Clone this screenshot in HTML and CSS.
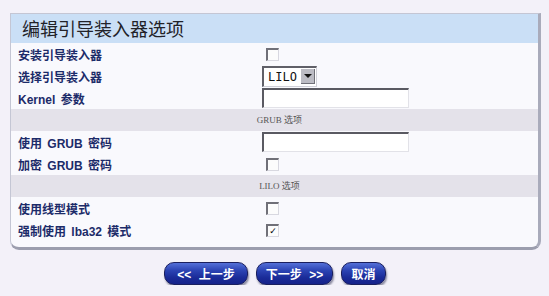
FILE: index.html
```html
<!DOCTYPE html>
<html lang="zh-CN">
<head>
    <meta charset="UTF-8">
    <title>编辑引导装入器选项</title>
    <link rel="stylesheet" href="styles.css">
</head>
<body>
    <div class="panel">
        <div class="panel-head">编辑引导装入器选项</div>

        <div class="row">
            <span class="label">安装引导装入器</span>
            <span class="field"><span class="check"></span></span>
        </div>
        <div class="row">
            <span class="label">选择引导装入器</span>
            <span class="field">
                <span class="select"><span class="select-text">LILO</span><span class="select-arrow"></span></span>
            </span>
        </div>
        <div class="row">
            <span class="label">Kernel 参数</span>
            <span class="field"><input class="text" type="text"></span>
        </div>

        <div class="section">GRUB 选项</div>

        <div class="row">
            <span class="label">使用 GRUB 密码</span>
            <span class="field"><input class="text" type="password"></span>
        </div>
        <div class="row">
            <span class="label">加密 GRUB 密码</span>
            <span class="field"><span class="check"></span></span>
        </div>

        <div class="section">LILO 选项</div>

        <div class="row">
            <span class="label">使用线型模式</span>
            <span class="field"><span class="check"></span></span>
        </div>
        <div class="row">
            <span class="label">强制使用 lba32 模式</span>
            <span class="field"><span class="check checked">✓</span></span>
        </div>
    </div>

    <div class="buttons">
        <button class="btn btn-prev">&lt;&lt; 上一步</button>
        <button class="btn btn-next">下一步 &gt;&gt;</button>
        <button class="btn btn-cancel">取消</button>
    </div>
</body>
</html>
```

FILE: styles.css
```css
body {
    margin: 0;
    padding: 13px 0 0 0;
    background-color: #f3f1f9;
    font-family: "Liberation Sans", "Noto Sans CJK SC", sans-serif;
}

.panel {
    margin-left: 10px;
    width: 527px;
    background-color: #f9f9fd;
    border: 1px solid #c4c6d4;
    border-right: 3px solid #a9abbb;
    border-bottom: 3px solid #9c9eae;
    border-radius: 0 0 9px 9px;
    padding-bottom: 6px;
}

.panel-head {
    height: 29px;
    line-height: 29px;
    padding-left: 11px;
    background-color: #cadff6;
    font-family: "Noto Sans CJK SC", sans-serif;
    font-size: 18px;
    color: #222228;
}

.row {
    display: grid;
    grid-template-columns: 251px 1fr;
    align-items: center;
    height: 22px;
}

.label {
    padding-left: 7px;
    font-family: "Liberation Sans", "Noto Sans CJK SC", sans-serif;
    font-size: 12px;
    font-weight: bold;
    color: #1c2b69;
    word-spacing: 2px;
}

.field {
    display: flex;
    align-items: center;
}

.check {
    display: block;
    width: 10px;
    height: 10px;
    margin-left: 4px;
    background-color: #fcfcfc;
    border-top: 2px solid #707078;
    border-left: 2px solid #707078;
    border-right: 1px solid #d8d8e0;
    border-bottom: 1px solid #d8d8e0;
    font-family: "DejaVu Sans", sans-serif;
    font-size: 9px;
    font-weight: bold;
    line-height: 10px;
    text-align: center;
    color: #000;
}

.select {
    display: flex;
    align-items: center;
    width: 50px;
    height: 16px;
    padding: 1px;
    background-color: #fff;
    border-top: 2px solid #606068;
    border-left: 2px solid #606068;
    border-right: 1px solid #d0d0d8;
    border-bottom: 1px solid #d0d0d8;
}

.select-text {
    flex: 1;
    padding-left: 3px;
    font-family: "DejaVu Sans Mono", monospace;
    font-size: 12px;
    color: #111;
}

.select-arrow {
    position: relative;
    width: 13px;
    height: 14px;
    background-color: #bcbcc4;
    border-right: 1px solid #707078;
    border-bottom: 1px solid #707078;
}

.select-arrow::after {
    content: "";
    position: absolute;
    left: 3px;
    top: 5px;
    border-left: 4px solid transparent;
    border-right: 4px solid transparent;
    border-top: 4px solid #111;
}

.text {
    box-sizing: border-box;
    width: 147px;
    height: 20px;
    margin: 0;
    padding: 0 3px;
    background-color: #fff;
    border-top: 2px solid #5a5a62;
    border-left: 2px solid #5a5a62;
    border-right: 1px solid #e2e2e8;
    border-bottom: 1px solid #e2e2e8;
    outline: none;
}

.section {
    height: 22px;
    line-height: 22px;
    background-color: #e4e2ea;
    text-align: center;
    font-family: "Liberation Serif", "Noto Sans CJK SC", serif;
    font-size: 9px;
    color: #555;
    padding-left: 10px;
}

.buttons {
    display: flex;
    justify-content: center;
    gap: 8px;
    margin-top: 12px;
    margin-left: 1px;
}

.btn {
    height: 23px;
    padding: 0;
    border: 1px solid #1a1f5e;
    border-radius: 10px;
    background: linear-gradient(#5470d8 0%, #2c44b4 35%, #1a2b98 70%, #16228a 100%);
    box-shadow: 1px 2px 2px #8a8aa0;
    font-family: "Liberation Sans", "Noto Sans CJK SC", sans-serif;
    font-size: 12px;
    font-weight: bold;
    color: #fff;
    white-space: nowrap;
    word-spacing: 4px;
}

.btn-prev {
    width: 84px;
}

.btn-next {
    width: 77px;
}

.btn-cancel {
    width: 45px;
}
```
